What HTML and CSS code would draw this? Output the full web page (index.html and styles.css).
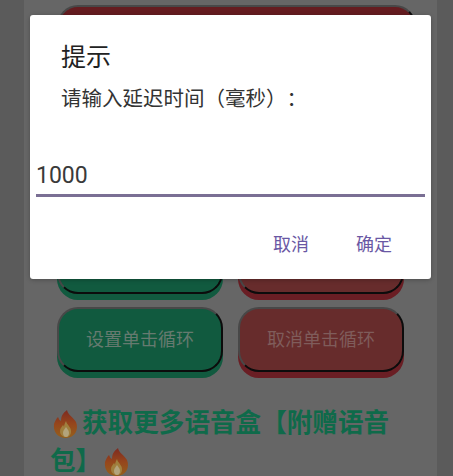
FILE: index.html
```html
<!DOCTYPE html>
<html lang="zh-CN">
<head>
<meta charset="utf-8">
<title>提示</title>
<link rel="stylesheet" href="styles.css">
</head>
<body>
<svg class="defs" width="0" height="0" aria-hidden="true">
  <defs>
    <linearGradient id="flame" x1="0" y1="0" x2="0" y2="1">
      <stop offset="0" stop-color="#7d2a20"/>
      <stop offset="0.5" stop-color="#96461c"/>
      <stop offset="1" stop-color="#94601c"/>
    </linearGradient>
    <symbol id="fire" viewBox="0 0 32 32">
      <path fill="url(#flame)" d="M17 3c1 5 6 7 9 12 3 7-1 16-10 16S3 24 4 17c1-3 2-5 4-7 1 2 1 3 3 4 0-5 2-8 6-11z"/>
      <path fill="#a07f3e" d="M16 14c1 4 5 6 5 10 0 4-2 6-5 6s-6-2-6-6c0-3 2-4 3-6 1 1 1 2 1 2 0-2 1-4 2-6z"/>
      <path fill="#b3a47c" d="M16 20c1 2 3 3 3 6 0 2-1 4-3 4s-3-2-3-4c0-3 2-4 3-6z"/>
    </symbol>
  </defs>
</svg>
<main class="card">
  <div class="btn btn-wide"></div>
  <div class="grid">
    <div class="btn btn-green"></div>
    <div class="btn btn-red"></div>
    <div class="btn btn-green">设置单击循环</div>
    <div class="btn btn-red">取消单击循环</div>
  </div>
  <h2 class="heading"><svg class="fire"><use href="#fire"/></svg>获取更多语音盒【附赠语音包】<svg class="fire"><use href="#fire"/></svg></h2>
</main>
<section class="dialog">
  <h1 class="title">提示</h1>
  <p class="message">请输入延迟时间（毫秒）：</p>
  <div class="field">1000</div>
  <div class="actions">
    <span class="action">取消</span>
    <span class="action">确定</span>
  </div>
</section>
</body>
</html>
```
FILE: styles.css
```css
* { box-sizing: border-box; }
html, body { margin: 0; height: 476px; overflow: hidden; }
body {
  position: relative;
  background: #5b5b5b;
  font-family: "Noto Sans CJK SC", "Noto Sans", sans-serif;
  text-spacing-trim: space-all;
}
.defs { position: absolute; }
.card {
  width: 413px;
  height: 476px;
  margin-left: 24px;
  padding: 5px 0 0 33px;
  background: #666;
  overflow: hidden;
}
.btn {
  height: 65px;
  padding-bottom: 3px;
  border: 2px solid;
  border-color: #484848 #0c0c0c #0c0c0c #484848;
  border-radius: 21px;
  display: flex;
  align-items: center;
  justify-content: center;
  color: #667a70;
  font-size: 18px;
}
.btn-wide {
  width: 359px;
  margin-bottom: 159px;
  background: #651c20;
  box-shadow: 0 6px 0 #651c20;
}
.grid {
  display: grid;
  grid-template-columns: 166px 166px;
  column-gap: 15px;
  row-gap: 13px;
}
.btn-green { background: #115a3f; box-shadow: 0 6px 0 #115a3f; }
.btn-red { background: #672c2c; box-shadow: 0 6px 0 #6a1e24; color: #7f5c5b; }
.heading {
  margin: 30px 0 0 -7px;
  width: 361px;
  color: #0f6a4a;
  font-size: 25.6px;
  line-height: 38px;
  font-weight: 700;
}
.fire { width: 32px; height: 32px; vertical-align: -7px; margin-top: -6px; }
.dialog {
  position: absolute;
  left: 30px;
  top: 15px;
  width: 401px;
  height: 264px;
  padding: 23px 6px 0;
  background: #fff;
  border-radius: 3px;
  box-shadow: 0 1px 4px rgba(0, 0, 0, .25);
  color: #333;
}
.title {
  margin: -2px 0 0 25px;
  font-size: 25px;
  line-height: 38px;
  font-weight: 400;
  color: #222;
}
.message {
  margin: 8px 0 0 25px;
  font-size: 20.5px;
  line-height: 30px;
}
.field {
  margin-top: 51px;
  height: 31px;
  box-sizing: content-box;
  border-bottom: 3px solid #7a6f94;
  font-family: Roboto, sans-serif;
  font-size: 23px;
  line-height: 26px;
  color: #3a3a3a;
}
.actions {
  display: flex;
  justify-content: flex-end;
  gap: 47px;
  margin: 33px 33px 0 0;
}
.action {
  font-size: 18px;
  line-height: 26px;
  color: #6a58a4;
}
```
